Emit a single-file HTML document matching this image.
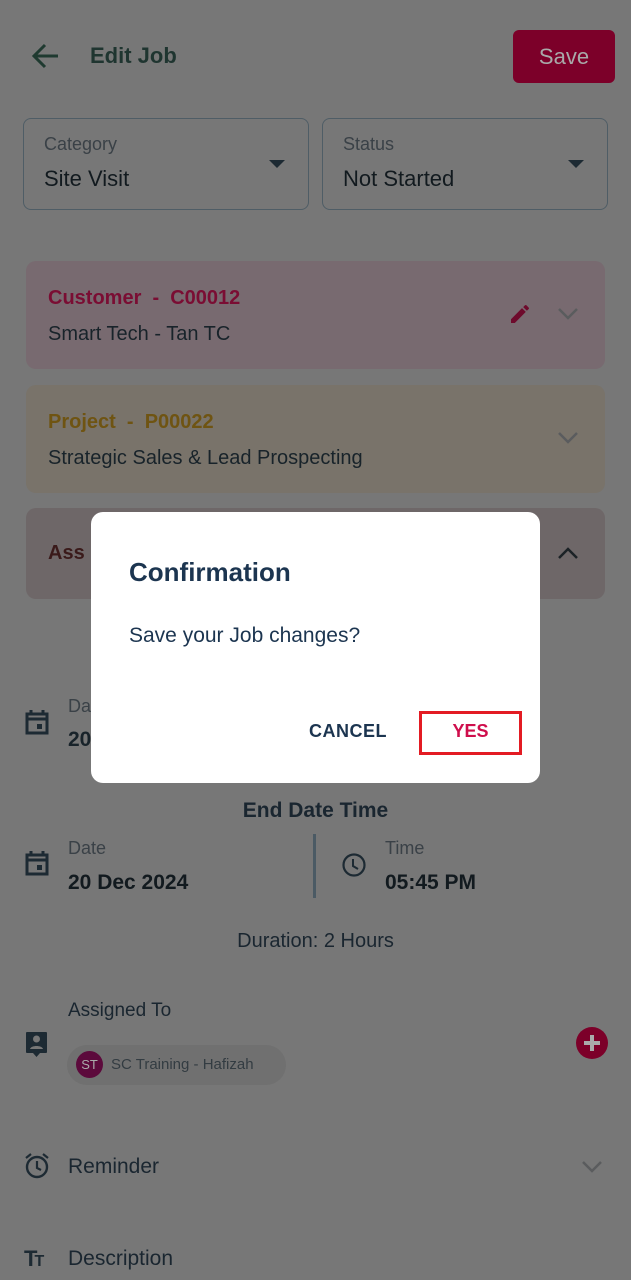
<!DOCTYPE html>
<html><head><meta charset="utf-8"><style>
*{margin:0;padding:0;box-sizing:border-box}
body{width:631px;height:1280px;background:#777777;font-family:"Liberation Sans",sans-serif;position:relative;overflow:hidden;color:#18232a}
.a{position:absolute}
.box{position:absolute;border:1.5px solid #4f5d66;border-radius:8px;top:118px;height:92px}
.lbl{font-size:18px;color:#3a4147}
.val{font-size:22px;color:#121a1f}
.card{position:absolute;left:26px;width:579px;border-radius:10px}
.tri{position:absolute;width:0;height:0;border-left:8px solid transparent;border-right:8px solid transparent;border-top:8px solid #1d2a33}
</style></head><body>
<svg class="a" style="left:30px;top:42px" width="30" height="28" viewBox="0 0 30 28"><path d="M28 14H5M15 3L4 14l11 11" stroke="#1f3a30" stroke-width="3" fill="none"/></svg>
<div class="a" style="left:90px;top:43px;font-size:22px;font-weight:bold;color:#1f3530">Edit Job</div>
<div class="a" style="left:513px;top:30px;width:102px;height:53px;background:#7c0029;border-radius:6px;color:#a9a9a9;font-size:22px;text-align:center;line-height:53px">Save</div>
<div class="box" style="left:23px;width:286px"><div class="a lbl" style="left:20px;top:15px">Category</div><div class="a val" style="left:20px;top:47px">Site Visit</div><div class="tri" style="left:245px;top:41px"></div></div>
<div class="box" style="left:322px;width:286px"><div class="a lbl" style="left:20px;top:15px">Status</div><div class="a val" style="left:20px;top:47px">Not Started</div><div class="tri" style="left:245px;top:41px"></div></div>
<div class="card" style="top:261px;height:108px;background:#786a70">
<div class="a" style="left:22px;top:26px;font-size:20px;font-weight:bold;color:#7a0d33">Customer &nbsp;- &nbsp;C00012</div>
<div class="a" style="left:22px;top:62px;font-size:20px;color:#18232a">Smart Tech - Tan TC</div>
<svg class="a" style="left:482px;top:41px" width="24" height="24" viewBox="0 0 24 24"><path d="M3 17.2V21h3.8L17.8 9.9l-3.8-3.8zM20.7 7a1 1 0 000-1.4l-2.3-2.3a1 1 0 00-1.4 0l-1.8 1.8 3.7 3.7z" fill="#6e0a2c"/></svg>
<svg class="a" style="left:531px;top:46px" width="22" height="14" viewBox="0 0 22 14"><path d="M2 2l9 9 9-9" stroke="#5a5c5e" stroke-width="2.5" fill="none"/></svg>
</div>
<div class="card" style="top:385px;height:108px;background:#79736a">
<div class="a" style="left:22px;top:26px;font-size:20px;font-weight:bold;color:#6f5412">Project &nbsp;- &nbsp;P00022</div>
<div class="a" style="left:22px;top:62px;font-size:20px;color:#18232a">Strategic Sales &amp; Lead Prospecting</div>
<svg class="a" style="left:531px;top:46px" width="22" height="14" viewBox="0 0 22 14"><path d="M2 2l9 9 9-9" stroke="#5a5c5e" stroke-width="2.5" fill="none"/></svg>
</div>
<div class="card" style="top:508px;height:91px;background:#6e6768">
<div class="a" style="left:22px;top:34px;font-size:20px;font-weight:bold;color:#3a1a1a">Ass</div>
<svg class="a" style="left:531px;top:38px" width="22" height="14" viewBox="0 0 22 14"><path d="M2 12l9-9 9 9" stroke="#1c2226" stroke-width="2.5" fill="none"/></svg>
</div>
<svg class="a" style="left:25px;top:709px" width="24" height="26" viewBox="0 0 24 26"><path d="M2 5h20v19H2z M2 10h20" stroke="#1d2a33" stroke-width="3" fill="none"/><rect x="12" y="15" width="5" height="5" fill="#1d2a33"/><path d="M6 1v5M18 1v5" stroke="#1d2a33" stroke-width="3"/></svg>
<div class="a lbl" style="left:68px;top:696px">Da</div>
<div class="a" style="left:68px;top:728px;font-size:21px;font-weight:bold">20</div>
<div class="a" style="left:0;width:631px;top:799px;text-align:center;font-size:21px;font-weight:bold;color:#1a2630">End Date Time</div>
<svg class="a" style="left:25px;top:850px" width="24" height="26" viewBox="0 0 24 26"><path d="M2 5h20v19H2z M2 10h20" stroke="#1d2a33" stroke-width="3" fill="none"/><rect x="12" y="15" width="5" height="5" fill="#1d2a33"/><path d="M6 1v5M18 1v5" stroke="#1d2a33" stroke-width="3"/></svg>
<div class="a lbl" style="left:68px;top:838px">Date</div>
<div class="a" style="left:68px;top:871px;font-size:21px;font-weight:bold;color:#121a1f">20 Dec 2024</div>
<div class="a" style="left:313px;top:834px;width:3px;height:64px;background:#4b5a64"></div>
<svg class="a" style="left:341px;top:852px" width="26" height="26" viewBox="0 0 26 26"><circle cx="13" cy="13" r="10.5" stroke="#1d2a33" stroke-width="2.2" fill="none"/><path d="M12 7v7l5 3" stroke="#1d2a33" stroke-width="2" fill="none"/></svg>
<div class="a lbl" style="left:385px;top:838px">Time</div>
<div class="a" style="left:385px;top:871px;font-size:21px;font-weight:bold;color:#121a1f">05:45 PM</div>
<div class="a" style="left:0;width:631px;top:930px;text-align:center;font-size:20px;color:#1a2630">Duration: 2 Hours</div>
<div class="a" style="left:68px;top:1000px;font-size:19px;color:#1a2630">Assigned To</div>
<svg class="a" style="left:25px;top:1031px" width="23" height="27" viewBox="0 0 23 27"><path d="M2 1h19a1 1 0 011 1v19a1 1 0 01-1 1h-6l-3.5 4-3.5-4H2a1 1 0 01-1-1V2a1 1 0 011-1z" fill="#1d2a33"/><circle cx="11.5" cy="8" r="3.5" fill="#777"/><path d="M5 18c1-4 12-4 13 0z" fill="#777"/></svg>
<div class="a" style="left:67px;top:1045px;width:219px;height:40px;border-radius:20px;background:#707070"></div>
<div class="a" style="left:76px;top:1051px;width:27px;height:27px;border-radius:50%;background:#5c0a3c;color:#aaa;font-size:13px;text-align:center;line-height:27px">ST</div>
<div class="a" style="left:111px;top:1056px;font-size:15px;color:#333c42">SC Training - Hafizah</div>
<div class="a" style="left:576px;top:1027px;width:32px;height:32px;border-radius:50%;background:#7c0029"></div>
<div class="a" style="left:584px;top:1041px;width:16px;height:4px;background:#aaa"></div>
<div class="a" style="left:590px;top:1035px;width:4px;height:16px;background:#aaa"></div>
<svg class="a" style="left:24px;top:1152px" width="26" height="28" viewBox="0 0 26 28"><circle cx="13" cy="15" r="10" stroke="#1d2a33" stroke-width="2.4" fill="none"/><path d="M13 9v7l4 2M2 6l5-4M24 6l-5-4" stroke="#1d2a33" stroke-width="2.2" fill="none"/></svg>
<div class="a" style="left:68px;top:1155px;font-size:21px;color:#1a2630">Reminder</div>
<svg class="a" style="left:581px;top:1160px" width="22" height="14" viewBox="0 0 22 14"><path d="M2 2l9 9 9-9" stroke="#5a5c5e" stroke-width="2.5" fill="none"/></svg>
<div class="a" style="left:24px;top:1246px;font-size:22px;font-weight:bold;color:#1d2a33;letter-spacing:-3px">T<span style="font-size:16px">T</span></div>
<div class="a" style="left:68px;top:1247px;font-size:21px;color:#1a2630">Description</div>
<div class="a" style="left:91px;top:512px;width:449px;height:271px;background:#fff;border-radius:12px">
<div class="a" style="left:38px;top:45px;font-size:26px;font-weight:bold;color:#1c3550">Confirmation</div>
<div class="a" style="left:38px;top:112px;font-size:21px;color:#1c3550">Save your Job changes?</div>
<div class="a" style="left:218px;top:209px;font-size:18px;font-weight:bold;color:#1c3550;letter-spacing:.5px">CANCEL</div>
<div class="a" style="left:328px;top:199px;width:103px;height:44px;border:3px solid #e31b23"></div>
<div class="a" style="left:328px;top:209px;width:103px;text-align:center;font-size:18px;font-weight:bold;color:#cf0e4c">YES</div>
</div>
</body></html>
